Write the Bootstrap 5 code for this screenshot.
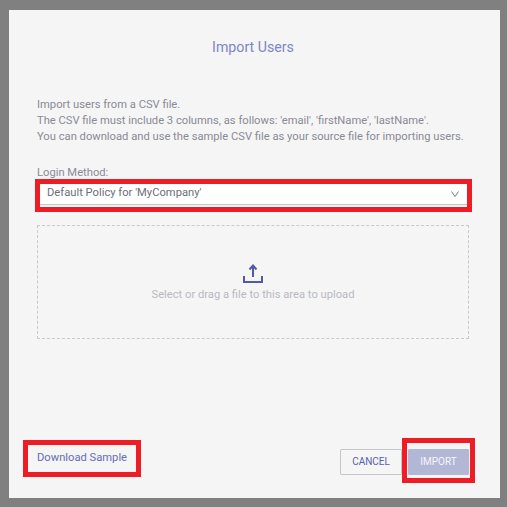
<!DOCTYPE html>
<html lang="en">
<head>
<meta charset="utf-8">
<title>Import Users</title>
<link href="https://cdn.jsdelivr.net/npm/bootstrap@5.3.0/dist/css/bootstrap.min.css" rel="stylesheet">
<style>
html,body{height:100%;}
body{background:#808080;font-family:Roboto,"Liberation Sans",sans-serif;font-size:11px;color:#8a8a96;padding:10px 7px 9px 9px;overflow:hidden;}
.dlg{height:488px;width:491px;background:#f5f5f5;padding:0 31px 0 28px;position:relative;}
.dlg-title{font-size:14.2px;line-height:20px;color:#7f86c6;text-align:center;padding-top:27px;margin:0;font-weight:400;}
.intro{margin:40px 0 0;line-height:16px;font-size:11.2px;}
.lbl{display:block;margin:21px 0 0;line-height:14px;font-size:11.2px;}
.picker{height:22px;margin:3px -2px 0 3px;background:#fff;border-bottom:1px solid #c4c4c8;padding:0 12px 0 7px;color:#6e6e7a;font-size:11.2px;}
.drop{height:114px;margin-top:20px;border:1px dashed #c9c9c9;color:#b9b9c3;font-size:11.2px;padding-top:38px;}
.foot{margin-top:110px;}
.dl{color:#666db4;font-size:11.2px;text-decoration:none;margin-bottom:8px;}
.btn-cancel,.btn-import{height:26px;padding:0;font-size:10px;border-radius:1px;font-weight:400;line-height:24px;}
.btn-cancel{width:62px;border:1px solid #c6c6c6;background:#f5f5f5;color:#5560aa;margin-right:6px;}
.btn-import{width:61px;border:1px solid #b3b7d6;background:#b3b7d6;color:#f5f5fa;}
.ann{position:absolute;border:5px solid #ee1c25;pointer-events:none;}
.ann-sel{left:26px;top:169px;width:437px;height:33px;}
.ann-dl{left:14px;top:430px;width:118px;height:37px;}
.ann-imp{left:393px;top:428px;width:73px;height:45px;}
</style>
</head>
<body>
<div class="dlg">
  <h1 class="dlg-title">Import Users</h1>
  <p class="intro">Import users from a CSV file.<br>The CSV file must include 3 columns, as follows: 'email', 'firstName', 'lastName'.<br>You can download and use the sample CSV file as your source file for importing users.</p>
  <label class="lbl">Login Method:</label>
  <div class="picker d-flex align-items-center justify-content-between">
    <span>Default Policy for 'MyCompany'</span>
    <svg width="8" height="6" viewBox="0 0 8 6"><path d="M.5.5L4 5.500 7.500.5" fill="none" stroke="#77778a" stroke-width="1"/></svg>
  </div>
  <div class="drop d-flex flex-column align-items-center">
    <svg width="20" height="19" viewBox="0 0 20 19" class="d-block"><path d="M10 13V2M6.500 5.500L10 1.500l3.500 4" fill="none" stroke="#4f5ba6" stroke-width="2"/><path d="M1 12v6h18v-6" fill="none" stroke="#4f5ba6" stroke-width="2"/></svg>
    <span class="mt-1">Select or drag a file to this area to upload</span>
  </div>
  <div class="foot d-flex justify-content-between align-items-center">
    <a class="dl" href="#">Download Sample</a>
    <div class="d-flex">
      <button class="btn btn-cancel" type="button">CANCEL</button>
      <button class="btn btn-import" type="button">IMPORT</button>
    </div>
  </div>
  <div class="ann ann-sel"></div>
  <div class="ann ann-dl"></div>
  <div class="ann ann-imp"></div>
</div>
<script src="https://cdn.jsdelivr.net/npm/bootstrap@5.3.0/dist/js/bootstrap.bundle.min.js"></script>
</body>
</html>
